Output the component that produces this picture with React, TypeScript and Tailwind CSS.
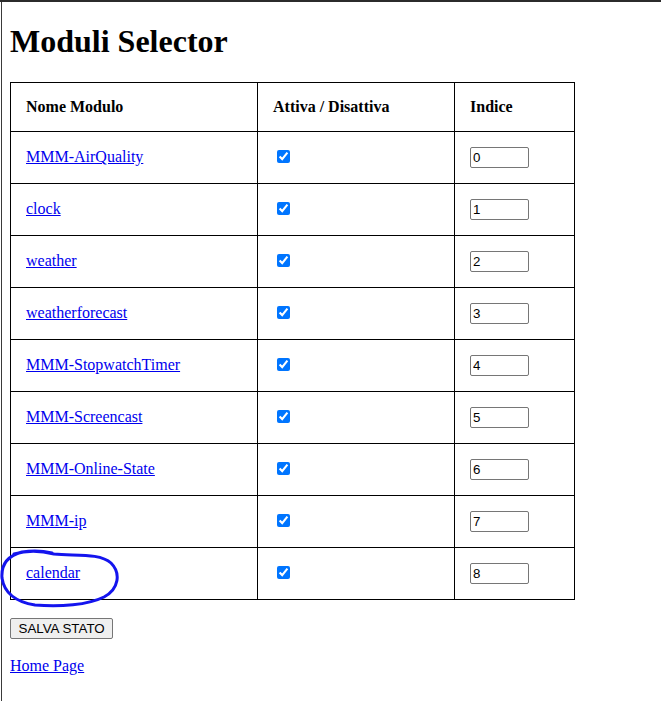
const modules = [
  'MMM-AirQuality',
  'clock',
  'weather',
  'weatherforecast',
  'MMM-StopwatchTimer',
  'MMM-Screencast',
  'MMM-Online-State',
  'MMM-ip',
  'calendar',
]

function Row({ name, index }: { name: string; index: number }) {
  return (
    <tr>
      <td className="border border-black p-[15px] align-middle">
        <a href="#" className="text-[#0000ee] underline">{name}</a>
      </td>
      <td className="border border-black p-[15px] align-middle">
        <input type="checkbox" defaultChecked className="m-[2px_3px_4px_4px] w-[13px] h-[13px] align-middle accent-[#0075ff]" />
      </td>
      <td className="border border-black p-[15px] align-middle">
        <input
          type="text"
          defaultValue={String(index)}
          className="block w-[59px] h-[21px] border border-[#767676] rounded-[2px] px-[2px] bg-white text-black text-[13.333px] leading-[normal] font-['Liberation_Sans',Arial,sans-serif]"
        />
      </td>
    </tr>
  )
}

export default function App() {
  return (
    <div className="relative min-h-screen bg-white border-t-2 border-[#2b2b2b] font-['Liberation_Serif','Times_New_Roman',serif] text-black text-[16px] leading-[normal]">
      <div className="ml-px min-h-[699px] border-l border-[#3a3a3a] pl-2 pt-[21.44px]">
        <h1 className="text-[32px] font-bold leading-[normal] mb-[21.44px]">Moduli Selector</h1>

        <table className="table-fixed border-collapse w-[564px]">
          <colgroup>
            <col className="w-[247px]" />
            <col className="w-[197px]" />
            <col className="w-[120px]" />
          </colgroup>
          <thead>
            <tr>
              <th className="border border-black p-[15px] text-left font-bold">Nome Modulo</th>
              <th className="border border-black p-[15px] text-left font-bold">Attiva / Disattiva</th>
              <th className="border border-black p-[15px] text-left font-bold">Indice</th>
            </tr>
          </thead>
          <tbody>
            {modules.map((m, i) => <Row key={m} name={m} index={i} />)}
          </tbody>
        </table>

        <div className="mt-[18px] flex">
          <button className="h-[21px] px-[7.5px] border border-[#767676] rounded-[2px] bg-[#efefef] text-black text-[13.333px] leading-[normal] font-['Liberation_Sans',Arial,sans-serif]">
            SALVA STATO
          </button>
        </div>

        <div className="mt-[18px]">
          <a href="#" className="text-[#0000ee] underline">Home Page</a>
        </div>
      </div>

      <svg className="absolute left-0 top-[-2px] pointer-events-none" width="661" height="701" viewBox="0 0 661 701" fill="none">
        <path
          d="M 14 554 C 28 550, 42 551, 54 554 C 76 556, 100 553, 111 563 C 121 573, 119 589, 104 597 C 88 605, 60 607, 35 605 C 15 602, 4 592, 2 578 C 1 565, 7 556, 22 552 C 34 550, 44 551, 52 553"
          stroke="#1414ee"
          strokeWidth="3"
          strokeLinecap="round"
          strokeLinejoin="round"
        />
      </svg>
    </div>
  )
}
